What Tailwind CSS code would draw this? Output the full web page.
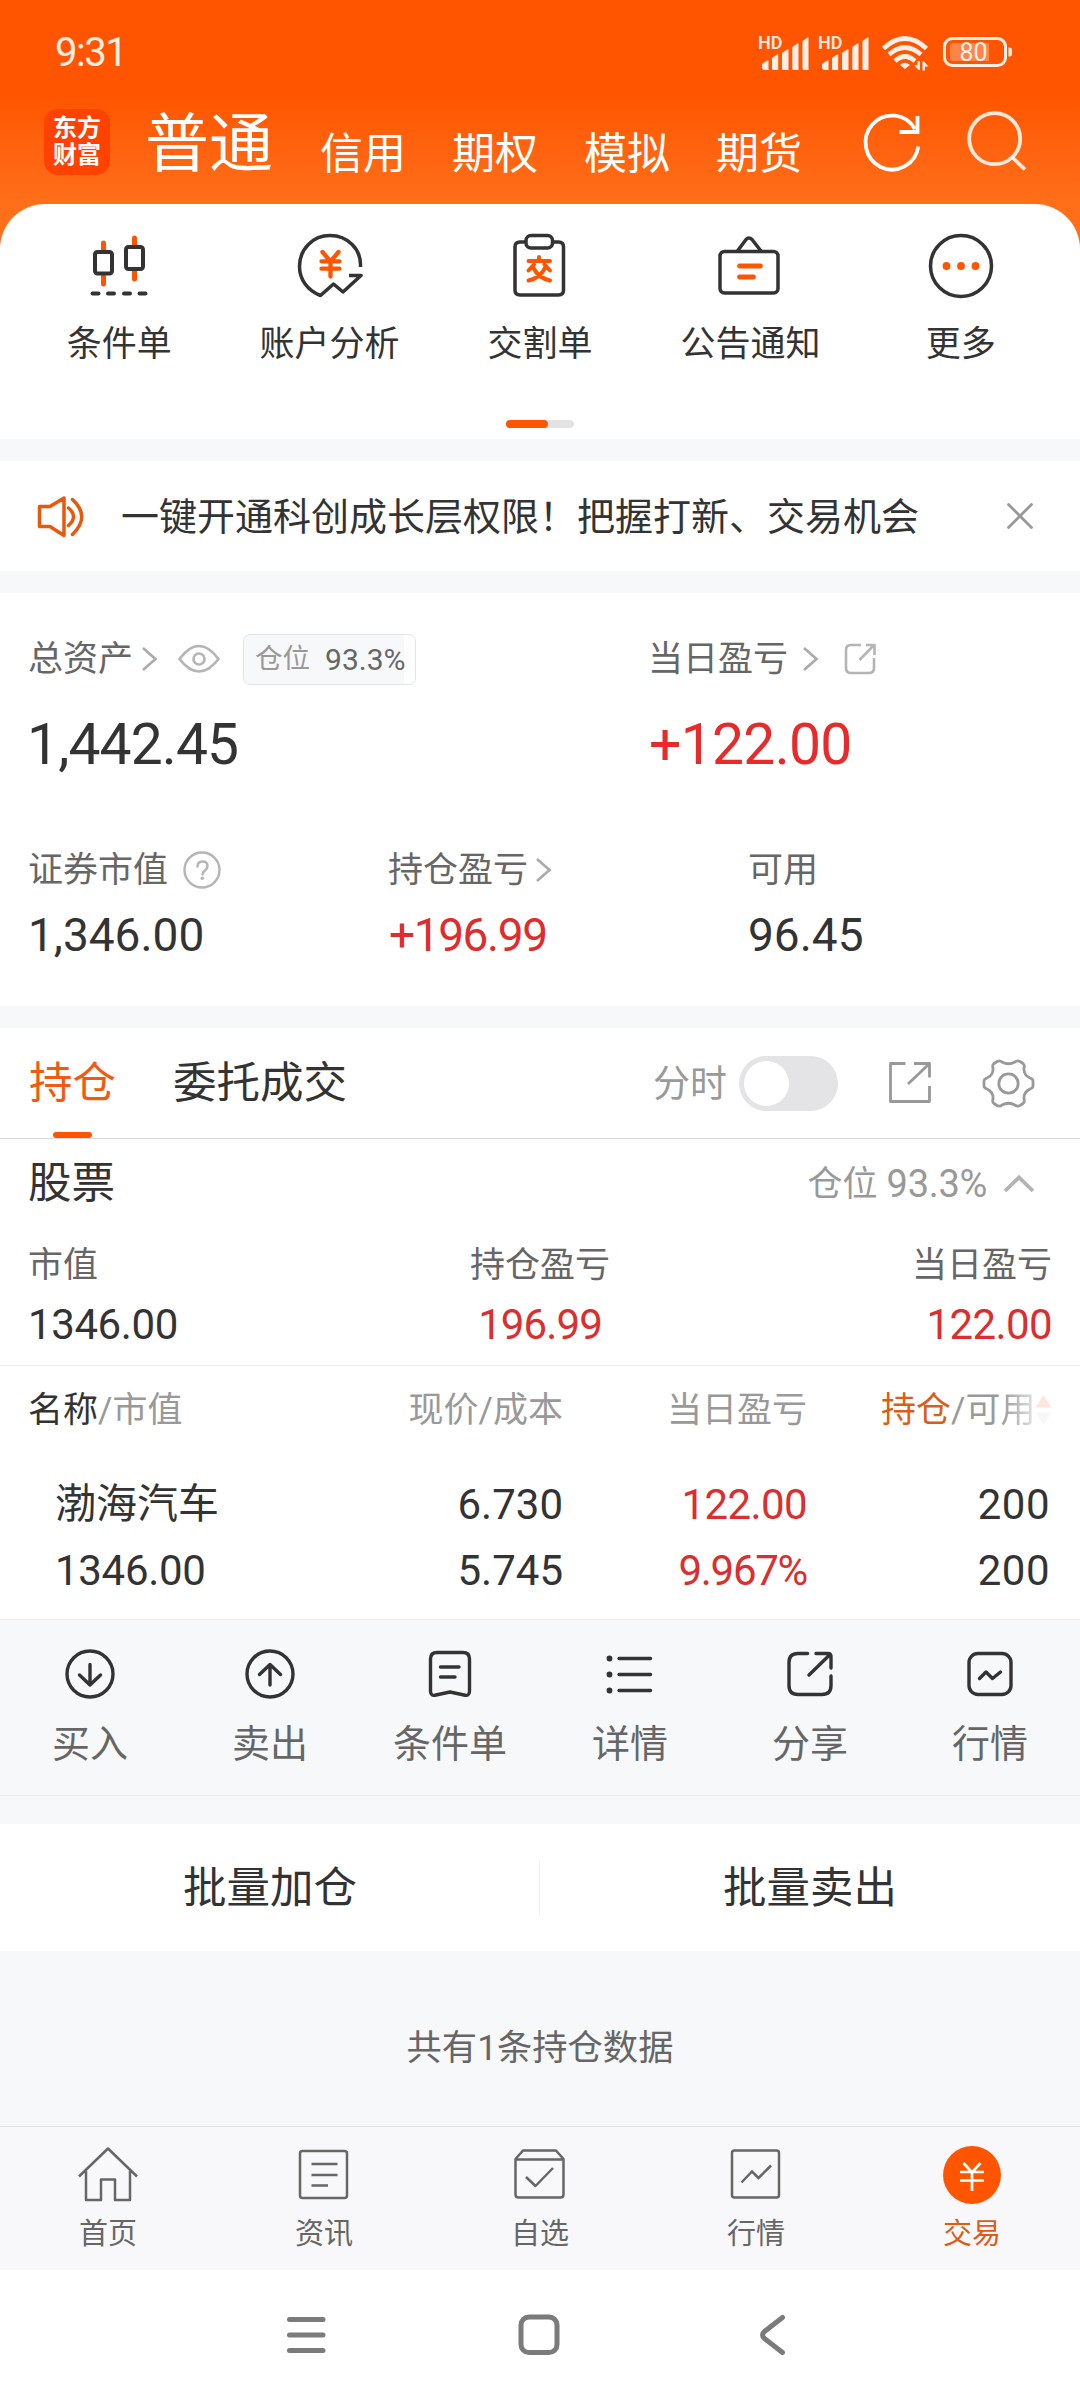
<!DOCTYPE html>
<html lang="zh-CN">
<head>
<meta charset="utf-8">
<title>交易</title>
<script src="https://cdn.jsdelivr.net/npm/@tailwindcss/browser@4"></script>
</head>
<body class="w-[1080px] h-[2400px] overflow-hidden bg-[#f7f8fa] font-['Roboto','Noto_Sans_CJK_SC',sans-serif] text-[#333] text-[35px] leading-none whitespace-nowrap">
<div class="flex flex-col w-[1080px] h-[2400px]">

  <!-- header -->
  <header class="h-[250px] shrink-0 bg-linear-to-b from-[#ff5500] from-[95px] to-[#ff6f19] to-[204px] text-white">
    <div class="h-[104px] flex items-center justify-between pl-[55px] pr-[64px]">
      <span class="text-[40px] tracking-[-1.500px] pt-[2px] text-white/90">9:31</span>
      <svg class="w-[260px] h-[44px]" viewBox="756 30 260 44" fill="#fff" fill-opacity=".9">
        <text x="758" y="48.500" font-size="18" font-weight="600" font-family="Roboto">HD</text>
        <text x="818" y="48.500" font-size="18" font-weight="600" font-family="Roboto">HD</text>
        <g id="sig"><path d="M762 68v-4l5-3.500h1.500V70h-5zM772 58l5-3.500h1.200V70h-4.700q-1.500 0-1.500-1.500zM782 53l5-3.500h1.500V70h-5q-1.500 0-1.500-1.500zM792.300 47l5-3.500h1.200V70h-4.700q-1.500 0-1.500-1.500zM802.500 41l5-3.500h1V70h-4.500q-1.500 0-1.500-1.500z"/></g>
        <use href="#sig" x="60"/>
        <g fill="none" stroke="#fff" stroke-opacity=".9" stroke-width="4.600">
          <path d="M883.500 48.500Q905 28.500 926.500 48.500"/><path d="M889 54.500Q905 40.500 921 54.500"/><path d="M895 61Q905 52 915 61"/>
        </g>
        <path d="M905 69l-5-4q5-4.500 10 0z"/>
        <path d="M917.500 61h2.500v9h-1.500l-4.500-5h3.500zM922.500 70.500v-9h1.500l4.500 5h-3.500v4z"/>
        <rect x="944.500" y="38.500" width="61" height="27" rx="8" fill="none" stroke="#fff" stroke-opacity=".9" stroke-width="3"/>
        <path d="M1008.500 47.500q3.500 0 3.500 2v5q0 2-3.500 2z"/>
        <path d="M953 43h36v18h-36q-3 0-3-3v-12q0-3 3-3z" fill-opacity=".28"/>
        <text x="959.500" y="60.800" font-size="25" font-family="Roboto">80</text>
      </svg>
    </div>
    <div class="h-[76px] flex items-center pl-[44px]">
      <div class="w-[66px] h-[66px] rounded-[14px] bg-[#ff4200] flex items-center justify-center text-center font-bold text-[24px] leading-[27px]">东方<br>财富</div>
      <div class="flex items-end ml-[35px] pt-[5px]">
        <span class="text-[64px] w-[175px]">普通</span>
        <span class="text-[43px] w-[132px] pb-px">信用</span>
        <span class="text-[43px] w-[132px] pb-px">期权</span>
        <span class="text-[43px] w-[132px] pb-px">模拟</span>
        <span class="text-[43px] w-[132px] pb-px">期货</span>
      </div>
      <svg class="w-[62px] h-[66px] ml-[12px]" viewBox="860 110 62 66" fill="none" stroke="#fff" stroke-width="3.800"><path d="M918.300 147.500A26.500 27 0 1 1 915 130"/><path d="M917.500 117v16h-18"/></svg>
      <svg class="w-[64px] h-[66px] ml-[42px]" viewBox="964 109 64 66" fill="none" stroke="#fff" stroke-opacity=".85" stroke-width="3.800"><circle cx="994.700" cy="138.700" r="25.500"/><path d="M1012 157l13 12.500"/></svg>
    </div>
  </header>

  <!-- shortcuts -->
  <section class="h-[235px] -mt-[46px] shrink-0 bg-white rounded-t-[45px] px-[14px] flex flex-col items-center">
    <div class="w-full grid grid-cols-5 mt-[26px]">
      <div class="flex flex-col items-center gap-[25px]">
        <svg class="w-[72px] h-[72px]" viewBox="83 230 72 72" fill="none" stroke="#333" stroke-width="4" stroke-linecap="round"><path d="M103.500 243v8M103.500 276v8M134.500 238v8M134.500 271v8" stroke="#ff5500" stroke-width="5"/><rect x="95" y="252" width="17" height="21.500" rx="2.500"/><rect x="126" y="247" width="17" height="22" rx="2.500"/><path d="M92.500 293.500h6M108 293.500h6M124 293.500h6M139.500 293.500h6"/></svg>
        <span>条件单</span>
      </div>
      <div class="flex flex-col items-center gap-[25px]">
        <svg class="w-[72px] h-[72px]" viewBox="293 230 72 72" fill="none" stroke="#333" stroke-width="3.500" stroke-linejoin="round"><path d="M359.500 267c1-18-13-31.500-30.500-31.500-17 0-30.500 13.500-30.500 31 0 13 8 24 21 29l13-11.500 9.500 8 18-16.500h-12"/><path d="M321.500 252l8 9.500 8-9.500M329.500 261.500v15M320.500 261.300h18M320.500 268.700h18" stroke="#ff5500" stroke-width="4.300" stroke-linecap="round"/></svg>
        <span>账户分析</span>
      </div>
      <div class="flex flex-col items-center gap-[25px]">
        <svg class="w-[72px] h-[72px]" viewBox="504 230 72 72" fill="none" stroke="#333" stroke-width="3.500" stroke-linejoin="round"><path d="M526 242h-6q-5 0-5 5v43q0 5 5 5h38.500q5 0 5-5v-43q0-5-5-5h-6"/><rect x="526" y="235.500" width="26.500" height="12.500" rx="5"/><path d="M539 257v3.500M528.500 261h21.500M534 264.500l-5.500 6M544.500 264.500l5.500 6M545 268q-5 10-16.500 12.500M533.500 268q5 10 16.500 12.500" stroke="#ff5500" stroke-width="4" stroke-linecap="round"/></svg>
        <span>交割单</span>
      </div>
      <div class="flex flex-col items-center gap-[25px]">
        <svg class="w-[72px] h-[72px]" viewBox="714 230 72 72" fill="none" stroke="#333" stroke-width="3.500" stroke-linejoin="round"><rect x="720" y="251.500" width="58" height="41.500" rx="4.500"/><path d="M737.500 251l8.500-11.500q3-3 6 0l9 11.500"/><path d="M739.500 266h21M739.500 277h14" stroke="#ff5500" stroke-width="4.800" stroke-linecap="round"/></svg>
        <span>公告通知</span>
      </div>
      <div class="flex flex-col items-center gap-[25px]">
        <svg class="w-[72px] h-[72px]" viewBox="925 230 72 72" fill="none" stroke="#333" stroke-width="3.500"><circle cx="961" cy="266" r="30.500"/><g fill="#ff5500" stroke="none"><circle cx="946.500" cy="266" r="3.900"/><circle cx="961" cy="266" r="3.900"/><circle cx="975.500" cy="266" r="3.900"/></g></svg>
        <span>更多</span>
      </div>
    </div>
    <div class="w-[68px] h-2 mt-[58px] rounded-full bg-[#e3e3e3]"><div class="w-[42px] h-2 rounded-full bg-[#ff5500]"></div></div>
  </section>

  <!-- notice -->
  <section class="h-[110px] mt-[22px] shrink-0 bg-white flex items-center pl-[36px] pr-[44px]">
    <svg class="w-[52px] h-[48px] mt-[2px]" viewBox="36 493 52 48" fill="none" stroke="#e9590c" stroke-width="3.500" stroke-linejoin="round" stroke-linecap="round"><path d="M39.500 506.500h10.500l14-8.500v37.500l-14-9h-10.500zM68.500 508q10 8.500 0 17.500M72.500 499.500q18.500 17 0 35"/></svg>
    <span class="text-[38px] ml-[33px] pt-[2px] flex-1">一键开通科创成长层权限！把握打新、交易机会</span>
    <svg class="w-[32px] h-[32px]" viewBox="1004 500 32 32" fill="none" stroke="#999" stroke-width="2.800" stroke-linecap="round"><path d="M1008.500 504.500l23 23M1031.500 504.500l-23 23"/></svg>
  </section>

  <!-- assets -->
  <section class="h-[413px] mt-[22px] shrink-0 bg-white pl-[28px] pt-[38px]">
    <div class="grid grid-cols-[620px_1fr]">
      <div class="h-[56px] flex items-center text-[#666]">
        <span>总资产</span>
        <svg class="w-[18px] h-[28px] ml-[7px]" viewBox="140 645 18 28" fill="none" stroke="#aaa" stroke-width="2.600"><path d="M143 648l12.500 11-12.500 11"/></svg>
        <svg class="w-[46px] h-[32px] ml-[18px]" viewBox="176 642 46 32" fill="none" stroke="#b5b5b5" stroke-width="2.700"><path d="M179.500 658Q189 645 199 645t19.500 13Q209 670.500 199 670.500T179.500 658z" stroke-linejoin="round"/><circle cx="199" cy="658" r="5.500"/></svg>
        <div class="w-[173px] h-[51px] ml-[21px] rounded-[7px] border border-[#e3e4e6] bg-linear-to-r from-[#f7f8fa] from-[93.300%] to-white to-[93.300%] flex items-center pl-[11px]">
          <span class="text-[27.500px] text-[#999]">仓位</span><span class="text-[30px] ml-[15px] pt-[2px]">93.3%</span>
        </div>
      </div>
      <div class="h-[56px] flex items-center text-[#666]">
        <span>当日盈亏</span>
        <svg class="w-[18px] h-[28px] ml-[13px]" viewBox="801 645 18 28" fill="none" stroke="#aaa" stroke-width="2.600"><path d="M804 648l12.500 11-12.500 11"/></svg>
        <svg class="w-[36px] h-[36px] ml-[23px]" viewBox="842 641 36 36" fill="none" stroke="#b5b5b5" stroke-width="2.600"><path d="M861 645h-10q-5 0-5 5v18q0 5 5 5h18q5 0 5-5v-10M866 645h8.500v10M874 645l-14.500 15"/></svg>
      </div>
      <div class="h-[114px] flex items-center text-[57px] tracking-[-0.9px] -ml-px">1,442.45</div>
      <div class="h-[114px] flex items-center text-[57px] tracking-[-0.7px] pl-[1px] text-[#e92a2a]">+122.00</div>
    </div>
    <div class="grid grid-cols-[360px_360px_1fr] mt-[40px]">
      <div class="h-[56px] flex items-center pt-[2px] text-[#666]"><span>证券市值</span>
        <svg class="w-[40px] h-[40px] ml-[14px] -mt-[1px]" viewBox="182 849 40 40" fill="none" stroke="#b5b5b5" stroke-width="2.400"><circle cx="202" cy="869" r="17.500"/><path d="M197.500 865.500q0-5 5-5t5 4.500q0 2.500-2.500 4.500t-2.500 4" stroke-linecap="round"/><circle cx="202.300" cy="877.300" r="1.800" fill="#b5b5b5" stroke="none"/></svg>
      </div>
      <div class="h-[56px] flex items-center pt-[2px] text-[#666]"><span>持仓盈亏</span>
        <svg class="w-[18px] h-[28px] ml-[6px]" viewBox="534 855 18 28" fill="none" stroke="#aaa" stroke-width="2.600"><path d="M537 858l12.500 11-12.500 11"/></svg>
      </div>
      <div class="h-[56px] flex items-center pt-[2px] text-[#666]">可用</div>
      <div class="h-[76px] flex items-center text-[46px]">1,346.00</div>
      <div class="h-[76px] flex items-center text-[46px] tracking-[-1.400px] pl-px text-[#e02c2c]">+196.99</div>
      <div class="h-[76px] flex items-center text-[46px]">96.45</div>
    </div>
  </section>

  <!-- holdings tabs -->
  <section class="h-[111px] mt-[22px] shrink-0 bg-white border-b border-[#dcdcdc] flex items-center pl-[29px] pr-[44px] text-[43.500px]">
    <div class="relative h-full flex items-center pt-[2px] text-[#f25a0e]">持仓<i class="absolute bottom-0 left-[24px] w-[39px] h-[6px] rounded-full bg-[#ff5500]"></i></div>
    <div class="ml-[57px] pt-[2px]">委托成交</div>
    <div class="ml-auto text-[37px] text-[#999] pt-[2px]">分时</div>
    <div class="w-[99px] h-[55px] ml-[12px] rounded-full bg-[#e4e4e6] flex items-center pl-[5px]"><div class="size-[45px] rounded-full bg-white"></div></div>
    <svg class="w-[48px] h-[48px] ml-[47px]" viewBox="885 1059 48 48" fill="none" stroke="#999" stroke-width="2.800"><path d="M905.500 1063.500h-15v38h39v-15.500M914 1063.500h15.500v14M929 1064l-21 20" stroke-linejoin="round"/></svg>
    <svg class="w-[56px] h-[56px] ml-[47px]" viewBox="980 1054 56 56" fill="none" stroke="#999" stroke-width="2.800" stroke-linejoin="round"><circle cx="1008.500" cy="1082.500" r="9.700"/><path d="M997 1060.500Q1000 1059 1002 1061Q1008.500 1064.500 1015 1061Q1017 1059 1020 1060.500L1023 1062.500Q1025 1064 1024 1067Q1023.500 1074 1030 1077Q1033 1078 1033 1080V1085Q1033 1087 1030 1088Q1023.500 1091 1024 1098Q1025 1101 1023 1102.500L1020 1104.500Q1017 1106 1015 1104Q1008.500 1100.500 1002 1104Q1000 1106 997 1104.500L994 1102.500Q992 1101 993 1098Q993.500 1091 987 1088Q984 1087 984 1085V1080Q984 1078 987 1077Q993.500 1074 993 1067Q992 1064 994 1062.500z"/></svg>
  </section>

  <!-- stock summary -->
  <section class="h-[227px] shrink-0 bg-white border-b border-[#ececec] pl-[28px] pr-[28px]">
    <div class="h-[88px] flex items-center pt-[2px]">
      <span class="text-[43.500px]">股票</span>
      <span class="ml-auto text-[#999]">仓位</span>
      <span class="ml-[9px] text-[38px] tracking-[-0.3px] text-[#999]">93.3%</span>
      <svg class="w-[36px] h-[24px] ml-[14px] mr-[15px]" viewBox="1001 1171 36 24" fill="none" stroke="#b3b3b3" stroke-width="3.800"><path d="M1005 1190l14-13.500 14 13.500"/></svg>
    </div>
    <div class="grid grid-cols-3 h-[74px] items-center pt-[3px] text-[#666]">
      <span>市值</span><span class="text-center">持仓盈亏</span><span class="text-right">当日盈亏</span>
    </div>
    <div class="grid grid-cols-3 h-[46px] items-center pt-px text-[42px]">
      <span class="tracking-[-0.400px]">1346.00</span><span class="text-center tracking-[-0.900px] text-[#dc2e2e]">196.99</span><span class="text-right tracking-[-0.600px] text-[#dc2e2e]">122.00</span>
    </div>
  </section>

  <!-- positions -->
  <section class="h-[253px] shrink-0 bg-white pl-[28px]">
    <div class="h-[86px] grid grid-cols-[535px_244px_243px] items-center pt-[2px] text-[#999]">
      <div class="flex justify-between"><span><span class="text-[#333]">名称</span>/市值</span><span>现价/成本</span></div>
      <span class="text-right">当日盈亏</span>
      <div class="flex items-center pl-[74px]">
        <span><span class="text-[#d95f17]">持仓</span>/可<span class="bg-linear-to-r from-[#999] to-[#e2e2e2] bg-clip-text text-transparent">用</span></span>
        <svg class="w-[18px] h-[32px] shrink-0" viewBox="1034 1393 18 32"><path d="M1042.500 1394l8 12.500h-16z" fill="#ffe6dc"/><path d="M1042.500 1424l8-12.500h-16z" fill="#f7f7f7"/></svg>
      </div>
    </div>
    <div class="h-[102px] grid grid-cols-[535px_244px_243px] items-center pt-[3px] text-[42px]">
      <div class="flex items-center justify-between pl-[27px]"><span class="text-[41px]">渤海汽车</span><span>6.730</span></div>
      <span class="text-right tracking-[-0.600px] text-[#dc2e2e]">122.00</span>
      <span class="text-right tracking-[0.500px]">200</span>
    </div>
    <div class="h-[34px] grid grid-cols-[535px_244px_243px] content-center items-center text-[42px]">
      <div class="flex items-center justify-between pl-[27px]"><span class="tracking-[-0.300px]">1346.00</span><span>5.745</span></div>
      <span class="text-right tracking-[-1.300px] text-[#dc2e2e]">9.967%</span>
      <span class="text-right tracking-[0.500px]">200</span>
    </div>
  </section>

  <!-- row actions -->
  <section class="h-[177px] shrink-0 border-y border-[#ebecee] grid grid-cols-6 text-[38px] text-[#666] pt-[25px]">
    <div class="flex flex-col items-center gap-[22px]">
      <svg class="size-[58px] shrink-0" viewBox="-29 -29 58 58" fill="none" stroke="#333" stroke-width="3.400" stroke-linecap="round" stroke-linejoin="round"><circle r="23"/><path d="M0-9.500V11M-10.500 1L0 11 10.500 1"/></svg><span>买入</span></div>
    <div class="flex flex-col items-center gap-[22px]">
      <svg class="size-[58px] shrink-0" viewBox="-29 -29 58 58" fill="none" stroke="#333" stroke-width="3.400" stroke-linecap="round" stroke-linejoin="round"><circle r="23"/><path d="M0 11V-9.500M-10.500 .5L0-9.500 10.500 .5"/></svg><span>卖出</span></div>
    <div class="flex flex-col items-center gap-[22px]">
      <svg class="size-[58px] shrink-0" viewBox="-29 -29 58 58" fill="none" stroke="#333" stroke-width="3.400" stroke-linecap="round" stroke-linejoin="round"><path d="M-13-21.500H13Q19.500-21.500 19.500-15V17Q19.500 22.500 14 21L0 18-14 21Q-19.500 22.500-19.500 17V-15Q-19.500-21.500-13-21.500zM-9.500-7H9M-9.500 3H5"/></svg><span>条件单</span></div>
    <div class="flex flex-col items-center gap-[22px]">
      <svg class="size-[58px] shrink-0" viewBox="-29 -29 58 58" fill="none" stroke="#333" stroke-width="3.400" stroke-linecap="round"><path d="M-11-15.500H20.500M-11 .5H20.500M-11 16.500H20.500"/><g fill="#333" stroke="none"><circle cx="-20.500" cy="-15.500" r="2.900"/><circle cx="-20.500" cy=".5" r="2.900"/><circle cx="-20.500" cy="16.500" r="2.900"/></g></svg><span>详情</span></div>
    <div class="flex flex-col items-center gap-[22px]">
      <svg class="size-[58px] shrink-0" viewBox="-29 -29 58 58" fill="none" stroke="#333" stroke-width="3.400" stroke-linecap="round" stroke-linejoin="round"><path d="M-2.500-20.500H-12Q-21-20.500-21-11.500V11.500Q-21 20.500-12 20.500H12Q21 20.500 21 11.500V2M6-20.500H18Q21-20.500 21-17.500V-6M19-18.500L-1 1"/></svg><span>分享</span></div>
    <div class="flex flex-col items-center gap-[22px]">
      <svg class="size-[58px] shrink-0" viewBox="-29 -29 58 58" fill="none" stroke="#333" stroke-width="3.400" stroke-linecap="round" stroke-linejoin="round"><rect x="-21" y="-20.500" width="42" height="41" rx="9"/><path d="M-10.500 4.500L-4-2 2.500 4.500 10.500-2"/></svg><span>行情</span></div>
  </section>

  <!-- batch actions -->
  <section class="h-[127px] mt-[28px] shrink-0 bg-white flex items-center text-[43.500px] text-center">
    <div class="flex-1 pt-[2px]">批量加仓</div>
    <div class="w-px h-[56px] -ml-px bg-[#f1f1f1]"></div>
    <div class="flex-1 pt-[2px]">批量卖出</div>
  </section>

  <div class="flex-1 flex items-center justify-center pt-[20px] text-[35.300px] text-[#666]">共有1条持仓数据</div>

  <!-- tab bar -->
  <nav class="h-[144px] shrink-0 bg-[#f8f8fa] border-t border-[#e2e3e5] grid grid-cols-5 text-[29px] text-[#666] pt-[18px]">
    <div class="flex flex-col items-center gap-[15px]">
      <svg class="size-[60px]" viewBox="-30 -30 60 60" fill="none" stroke="#666" stroke-width="2.500"><path d="M-29 1.500L0-26.500 29 1.500M-22-4V25H-7V4.500H7V25H22V-4" stroke-linejoin="round"/></svg><span>首页</span></div>
    <div class="flex flex-col items-center gap-[15px]">
      <svg class="size-[60px]" viewBox="-30 -30 60 60" fill="none" stroke="#666" stroke-width="2.500"><rect x="-24" y="-24" width="47" height="47" rx="2.500"/><path d="M-12.500-11H13.500M-12.500 0H13.500M-12.500 10.500H4"/></svg><span>资讯</span></div>
    <div class="flex flex-col items-center gap-[15px]">
      <svg class="size-[60px]" viewBox="-30 -30 60 60" fill="none" stroke="#666" stroke-width="2.500" stroke-linejoin="round"><path d="M-24.500-16L-17-24.500H16L23.500-16V19.500Q23.500 22.500 20.500 22.500H-21.500Q-24.500 22.500-24.500 19.500zM-24.500-15.500H23.500M-14 2L-4.500 11 13-7"/></svg><span>自选</span></div>
    <div class="flex flex-col items-center gap-[15px]">
      <svg class="size-[60px]" viewBox="-30 -30 60 60" fill="none" stroke="#666" stroke-width="2.500"><rect x="-24" y="-24.500" width="47" height="47" rx="2.500"/><path d="M-14.500 7.500L-4-3.500 2.500 3 15-9.500"/></svg><span>行情</span></div>
    <div class="flex flex-col items-center gap-[15px] text-[#e05a12]">
      <svg class="size-[60px]" viewBox="-30 -30 60 60" fill="none" stroke="#fff" stroke-width="2.700"><circle r="29" fill="#ff5500" stroke="none"/><path d="M-8.500-12L0-2.500 8.500-12M0-2.500V16M-12-3H12M-12 5.500H12"/></svg><span>交易</span></div>
  </nav>

  <!-- system navigation -->
  <div class="h-[130px] shrink-0 bg-white">
    <svg class="w-[1080px] h-[130px]" viewBox="0 2270 1080 130" fill="none" stroke="#7b7b7b" stroke-width="5" stroke-linecap="round"><path d="M289.500 2319.500h33.500M289.500 2335h33.500M289.500 2350.500h33.500"/><rect x="521" y="2317" width="36" height="35.500" rx="8"/><path d="M782.500 2317.500l-18 14q-4 3.500 0 7l18 14"/></svg>
  </div>
</div>
</body>
</html>
